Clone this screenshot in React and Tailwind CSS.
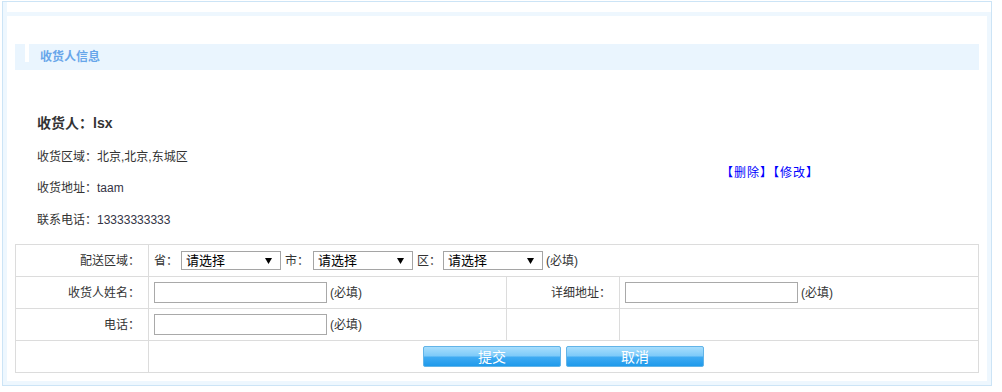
import React from 'react';

const font = { fontFamily: '"Liberation Sans", "Noto Sans CJK SC", sans-serif' };

// Fake native select: box + little down arrow
const Select = () => (
  <span className="relative inline-flex items-center w-[100px] h-[19px] border border-[#a5a5a5] bg-white pl-[4px] text-[13px] text-black leading-none">
    请选择
    <svg className="absolute right-[8px] top-[6px]" width="7" height="6" viewBox="0 0 7 6">
      <path d="M0 0h7L3.5 6z" fill="#000" />
    </svg>
  </span>
);

const TextInput = () => (
  <input type="text" className="w-[173px] h-[21px] border border-[#a9a9a9] bg-white outline-none px-1 text-[12px]" />
);

const Required = () => <span className="ml-[3px] text-[12px] text-[#333]">(必填)</span>;

const Label = ({ children }) => (
  <td className="h-[32px] border border-[#dcdcdc] text-right pr-[8px] text-[12px] text-[#333]">{children}</td>
);

export default function App() {
  return (
    <div className="w-[1002px] h-[392px] bg-white" style={font}>
      <div className="ml-[2px] mt-[1px] w-[990px] h-[385px] border border-[#cce4f6] flex">
        {/* pale left strip */}
        <div className="w-[4px] bg-[#eef7fe]" />
        <div className="flex-1 pt-[10px] flex flex-col">
          <div className="flex-1 border-t-4 border-r-4 border-b-4 border-[#eef7fe] px-[8px] pt-[28px]">
            {/* section header */}
            <div className="h-[26px] bg-[#eaf5fe] flex items-start">
              <span className="ml-[10px] w-[4px] h-[18px] bg-white" />
              <span className="ml-[11px] self-center text-[12px] font-bold text-[#67a6ea]">收货人信息</span>
            </div>

            {/* address info */}
            <div className="flex items-center mt-[40px]">
              <div className="w-[706px] pl-[22px] text-[12px] text-[#333]">
                <div className="h-[26px] flex items-center text-[14px] font-bold">收货人：lsx</div>
                <div className="h-[30px] mt-[6px] flex items-center">收货区域：北京,北京,东城区</div>
                <div className="h-[31px] flex items-center">
                  收货地址：<span className="text-[#334]">taam</span>
                </div>
                <div className="h-[33px] flex items-center">
                  联系电话：<span className="text-[#334]">13333333333</span>
                </div>
              </div>
              <div className="flex-1 text-[12px] tracking-[1px] text-[#0000ff]">
                <a href="#" className="text-[#0000ff]">【删除】</a>
                <a href="#" className="text-[#0000ff]">【修改】</a>
              </div>
            </div>

            {/* edit form */}
            <table className="mt-[8px] w-[964px] border-collapse table-fixed">
              <colgroup>
                <col className="w-[133px]" />
                <col className="w-[358px]" />
                <col className="w-[113px]" />
                <col />
              </colgroup>
              <tbody>
                <tr>
                  <Label>配送区域：</Label>
                  <td colSpan={3} className="h-[32px] border border-[#dcdcdc] pl-[5px] text-[12px] text-[#333]">
                    <div className="flex items-center">
                      <span className="mr-[3px]">省：</span>
                      <Select />
                      <span className="ml-[4px] mr-[4px]">市：</span>
                      <Select />
                      <span className="ml-[4px] mr-[2px]">区：</span>
                      <Select />
                      <Required />
                    </div>
                  </td>
                </tr>
                <tr>
                  <Label>收货人姓名：</Label>
                  <td className="h-[32px] border border-[#dcdcdc] pl-[5px]">
                    <div className="flex items-center">
                      <TextInput />
                      <Required />
                    </div>
                  </td>
                  <Label>详细地址：</Label>
                  <td className="h-[32px] border border-[#dcdcdc] pl-[5px]">
                    <div className="flex items-center">
                      <TextInput />
                      <Required />
                    </div>
                  </td>
                </tr>
                <tr>
                  <Label>电话：</Label>
                  <td className="h-[32px] border border-[#dcdcdc] pl-[5px]">
                    <div className="flex items-center">
                      <TextInput />
                      <Required />
                    </div>
                  </td>
                  <td className="h-[32px] border border-[#dcdcdc]" />
                  <td className="h-[32px] border border-[#dcdcdc]" />
                </tr>
                <tr>
                  <td className="h-[32px] border border-[#dcdcdc]" />
                  <td colSpan={3} className="h-[32px] border border-[#dcdcdc]">
                    <div className="flex justify-center gap-[5px]">
                      <button className="w-[138px] h-[21px] rounded-[2px] border border-[#62b4e8] bg-[linear-gradient(to_bottom,#a8defd_0%,#7fcbf9_45%,#3eaaf2_55%,#1f9aeb_100%)] text-white text-[14px] leading-none">
                        提交
                      </button>
                      <button className="w-[138px] h-[21px] rounded-[2px] border border-[#62b4e8] bg-[linear-gradient(to_bottom,#a8defd_0%,#7fcbf9_45%,#3eaaf2_55%,#1f9aeb_100%)] text-white text-[14px] leading-none">
                        取消
                      </button>
                    </div>
                  </td>
                </tr>
              </tbody>
            </table>
          </div>
        </div>
      </div>
    </div>
  );
}
